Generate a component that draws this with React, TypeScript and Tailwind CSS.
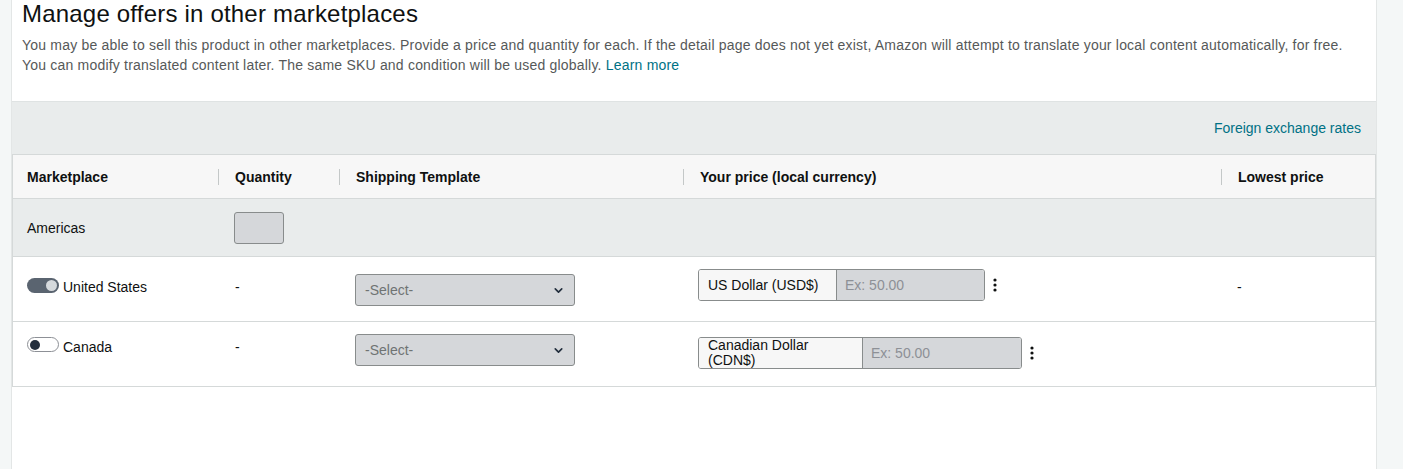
import { ChevronDown } from "lucide-react";

type Row = {
  name: string;
  enabled: boolean;
  currency: string[];
  labelWidth: string;
  inputWidth: string;
  lowest: string;
  height: string;
  pad: { cell: string; select: string; price: string };
};

const rows: Row[] = [
  {
    name: "United States",
    enabled: true,
    currency: ["US Dollar (USD$)"],
    labelWidth: "w-[138px]",
    inputWidth: "w-[147px]",
    lowest: "-",
    height: "h-[65px]",
    pad: { cell: "pt-[20px]", select: "pt-[17px]", price: "pt-[12px]" },
  },
  {
    name: "Canada",
    enabled: false,
    currency: ["Canadian Dollar", "(CDN$)"],
    labelWidth: "w-[164px]",
    inputWidth: "w-[158px]",
    lowest: "",
    height: "h-[64px]",
    pad: { cell: "pt-[15px]", select: "pt-[12px]", price: "pt-[15px]" },
  },
];

function Toggle({ on }: { on: boolean }) {
  return on ? (
    <span className="mt-[1px] flex h-[15px] w-[32px] shrink-0 items-center justify-end rounded-full bg-[#5a6470] pr-[2px]">
      <span className="h-[11px] w-[11px] rounded-full bg-[#d5d9dc]" />
    </span>
  ) : (
    <span className="flex h-[15px] w-[32px] shrink-0 items-center rounded-full border border-[#8d9096] bg-white pl-[2px]">
      <span className="h-[10px] w-[10px] rounded-full bg-[#232f3e]" />
    </span>
  );
}

function Kebab() {
  return (
    <svg width="4" height="14" viewBox="0 0 4 14" className="shrink-0">
      <circle cx="2" cy="2" r="1.6" fill="#0f1111" />
      <circle cx="2" cy="7" r="1.6" fill="#0f1111" />
      <circle cx="2" cy="12" r="1.6" fill="#0f1111" />
    </svg>
  );
}

function HeaderCell({ label, width, first }: { label: string; width: string; first?: boolean }) {
  return (
    <div className={`flex items-center ${width}`}>
      {first ? (
        <span className="pl-[14px]">{label}</span>
      ) : (
        <>
          <span className="h-[16px] w-px bg-[#c4c8c8]" />
          <span className="pl-[16px]">{label}</span>
        </>
      )}
    </div>
  );
}

export default function App() {
  return (
    <div className="flex min-h-[469px] bg-[#f4f7f7] pl-[11px] font-['Liberation_Sans',Arial,sans-serif] text-[14px] text-[#0f1111]">
      <div className="w-[1366px] border-x border-[#e3e6e6] bg-white">
        <div className="px-[10px] pb-[26px]">
          <h1 className="text-[24px] leading-[28px] font-normal tracking-[0.2px] text-[#0f1111]">
            Manage offers in other marketplaces
          </h1>
          <p className="mt-[7px] leading-5 tracking-[0.2px] whitespace-nowrap text-[#565959]">
            You may be able to sell this product in other marketplaces. Provide a price and quantity for each. If the detail page does not yet exist, Amazon will attempt to translate your local content automatically, for free.
            <br />
            You can modify translated content later. The same SKU and condition will be used globally.{" "}
            <span className="text-[#007185]">Learn more</span>
          </p>
        </div>

        <div className="flex h-[53px] items-center justify-end border-t border-[#dfe3e3] bg-[#e9ecec] pr-[15px]">
          <span className="text-[#007185]">Foreign exchange rates</span>
        </div>

        <div className="w-[1364px] border border-[#d5d9d9]">
          <div className="flex h-[44px] items-stretch border-b border-[#d5d9d9] bg-[#f7f7f7] pt-[1px] font-bold">
            <HeaderCell first label="Marketplace" width="w-[205px]" />
            <HeaderCell label="Quantity" width="w-[121px]" />
            <HeaderCell label="Shipping Template" width="w-[344px]" />
            <HeaderCell label="Your price (local currency)" width="w-[538px]" />
            <HeaderCell label="Lowest price" width="flex-1" />
          </div>

          <div className="flex h-[58px] items-center border-b border-[#d5d9d9] bg-[#e9ecec]">
            <div className="w-[205px] pt-[1px] pl-[14px]">Americas</div>
            <div className="w-[121px] pl-[16px]">
              <div className="h-[32px] w-[50px] rounded-[3px] border border-[#888c8c] bg-[#d5d7da]" />
            </div>
          </div>

          {rows.map((row, i) => (
            <div
              key={row.name}
              className={`flex ${row.height} ${i < rows.length - 1 ? "border-b border-[#d5d9d9]" : ""}`}
            >
              <div className={`flex w-[205px] items-start gap-[4px] pl-[14px] ${row.pad.cell}`}>
                <Toggle on={row.enabled} />
                <span className="leading-5">{row.name}</span>
              </div>
              <div className={`w-[121px] pl-[17px] leading-5 ${row.pad.cell}`}>-</div>
              <div className={`w-[344px] pl-[16px] ${row.pad.select}`}>
                <div className="flex h-[32px] w-[220px] items-center justify-between rounded-[3px] border border-[#888c8c] bg-[#d5d7da] pr-[9px] pl-[9px] text-[#6f7373]">
                  <span>-Select-</span>
                  <ChevronDown size={13} strokeWidth={3} color="#232f3e" />
                </div>
              </div>
              <div className={`w-[538px] pl-[15px] ${row.pad.price}`}>
                <div className="flex items-center gap-[8px]">
                  <div className="flex h-[32px] overflow-hidden rounded-[3px] border border-[#888c8c]">
                    <div
                      className={`${row.labelWidth} flex flex-col justify-center border-r border-[#888c8c] bg-[#f7f7f7] pl-[9px] leading-[15px] text-[#0f1111]`}
                    >
                      {row.currency.map((line) => (
                        <span key={line}>{line}</span>
                      ))}
                    </div>
                    <div className={`${row.inputWidth} flex items-center bg-[#d5d7da] pl-[8px] text-[#8d9096]`}>
                      Ex: 50.00
                    </div>
                  </div>
                  <Kebab />
                </div>
              </div>
              <div className={`flex-1 pl-[16px] leading-5 ${row.pad.cell}`}>{row.lowest}</div>
            </div>
          ))}
        </div>
      </div>
    </div>
  );
}
